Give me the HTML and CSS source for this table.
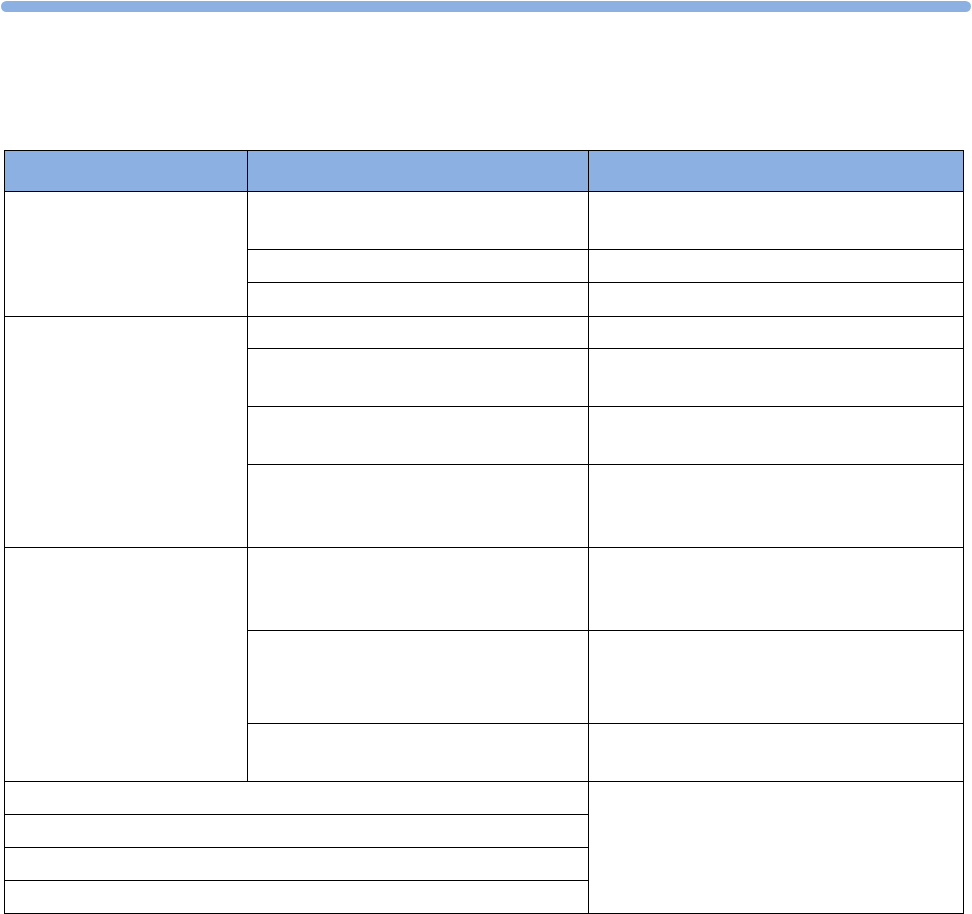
FILE: index.html
```html
<!DOCTYPE html>
<html lang="en">
<head>
<meta charset="utf-8">
<title>Table</title>
<link rel="stylesheet" href="styles.css">
</head>
<body>
<div class="top-bar"></div>
<table class="grid">
  <colgroup>
    <col class="c1"><col class="c2"><col class="c3">
  </colgroup>
  <thead>
    <tr class="h-head"><th></th><th></th><th></th></tr>
  </thead>
  <tbody>
    <tr class="h58"><td rowspan="3"></td><td></td><td></td></tr>
    <tr class="h33"><td></td><td></td></tr>
    <tr class="h34"><td></td><td></td></tr>

    <tr class="h32"><td rowspan="4"></td><td></td><td></td></tr>
    <tr class="h58"><td></td><td></td></tr>
    <tr class="h58"><td></td><td></td></tr>
    <tr class="h83"><td></td><td></td></tr>

    <tr class="h83"><td rowspan="3"></td><td></td><td></td></tr>
    <tr class="h93"><td></td><td></td></tr>
    <tr class="h58"><td></td><td></td></tr>

    <tr class="h33"><td colspan="2"></td><td rowspan="4"></td></tr>
    <tr class="h33"><td colspan="2"></td></tr>
    <tr class="h33"><td colspan="2"></td></tr>
    <tr class="h33"><td colspan="2"></td></tr>
  </tbody>
</table>
</body>
</html>
```
FILE: styles.css
```css
html, body {
  margin: 0;
  padding: 0;
  background: #ffffff;
  font-family: "Liberation Sans", Arial, sans-serif;
}

.top-bar {
  height: 11px;
  margin: 1px 1px 0 1px;
  background: #8db0e2;
  border-radius: 6px;
}

.grid {
  margin: 138px 0 0 4px;
  border-collapse: collapse;
  table-layout: fixed;
  width: 959px;
}

.c1 { width: 243px; }
.c2 { width: 341px; }
.c3 { width: 375px; }

.grid th,
.grid td {
  border: 1px solid #000000;
  padding: 0;
}

.grid th {
  background: #8db0e2;
}

.h-head { height: 41px; }
.h32 { height: 32px; }
.h33 { height: 33px; }
.h34 { height: 34px; }
.h58 { height: 58px; }
.h83 { height: 83px; }
.h93 { height: 93px; }
```
